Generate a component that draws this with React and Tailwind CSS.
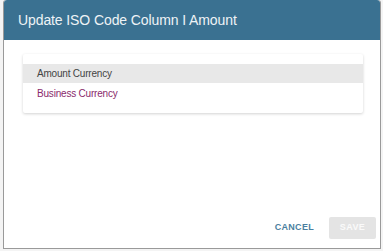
import React from "react";

const App = () => {
  return (
    <div className="w-[383px] h-[251px] bg-[#f4f4f4] overflow-hidden font-['Liberation_Sans',Arial,sans-serif]">
      <div className="ml-[3px] w-[378px] h-[249px] bg-white border-b border-x border-[#9a9a9a] rounded-t-[3px] flex flex-col">
        {/* Header */}
        <div className="h-[40px] bg-[#3a7191] rounded-t-[3px] flex items-center px-[14px]">
          <span className="text-[14px] text-[#eef3f6] tracking-[-0.1px]">Update ISO Code Column I Amount</span>
        </div>

        {/* Body */}
        <div className="px-[19px] pt-[14px]">
          <div className="w-[340px] bg-white rounded-[2px] shadow-[0_1px_3px_rgba(0,0,0,0.18)] pt-[10px] pb-[10px]">
            <div className="h-[19px] bg-[#e8e8e8] flex items-center px-[14px] text-[10px] tracking-[-0.2px] text-[#444]">
              Amount Currency
            </div>
            <div className="h-[20px] flex items-center px-[14px] text-[10px] tracking-[-0.2px] text-[#8a2a6c]">
              Business Currency
            </div>
          </div>
        </div>

        {/* Footer */}
        <div className="mt-auto flex items-center justify-end gap-[15px] pr-[4px] pb-[9px]">
          <span className="text-[9px] font-bold tracking-[0.3px] text-[#4b7fa0]">CANCEL</span>
          <div className="w-[47px] h-[22px] bg-[#e4e4e4] rounded-[2px] flex items-center justify-center">
            <span className="text-[9px] font-bold tracking-[0.4px] text-[#fafafa]">SAVE</span>
          </div>
        </div>
      </div>
    </div>
  );
};

export default App;
